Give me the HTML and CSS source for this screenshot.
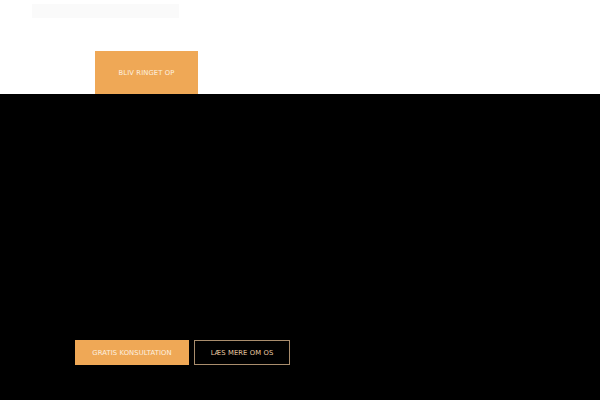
FILE: index.html
```html
<!DOCTYPE html>
<html lang="da">
<head>
<meta charset="utf-8">
<title>Forside</title>
<link rel="stylesheet" href="styles.css">
</head>
<body>
<header class="header">
  <div class="logo-bar"></div>
  <a class="btn btn-call" href="#">BLIV RINGET OP</a>
</header>
<section class="hero">
  <div class="hero-actions">
    <a class="btn btn-solid" href="#">GRATIS KONSULTATION</a>
    <a class="btn btn-outline" href="#">LÆS MERE OM OS</a>
  </div>
</section>
</body>
</html>
```
FILE: styles.css
```css
* { box-sizing: border-box; }
html, body { margin: 0; padding: 0; }
body {
  width: 600px;
  height: 400px;
  overflow: hidden;
  background: #000;
  font-family: "DejaVu Sans", "Liberation Sans", sans-serif;
}
.header {
  background: #fff;
  height: 94px;
  display: flex;
  flex-direction: column;
  padding: 4px 0 0 32px;
}
.logo-bar {
  width: 147px;
  height: 14px;
  background: #fafafa;
}
.btn {
  display: inline-flex;
  align-items: center;
  justify-content: center;
  font-size: 6.8px;
  text-decoration: none;
  letter-spacing: 0.1px;
  white-space: nowrap;
}
.btn-call {
  margin: 33px 0 0 63px;
  width: 103px;
  height: 43px;
  background: #efa856;
  color: #fdf1e0;
}
.hero {
  height: 306px;
  background: #000;
  display: flex;
  flex-direction: column;
  justify-content: flex-end;
  padding: 0 0 35px 75px;
}
.hero-actions {
  display: flex;
  gap: 5px;
}
.btn-solid {
  width: 114px;
  height: 25px;
  background: #efa856;
  color: #fdf1e0;
}
.btn-outline {
  width: 96px;
  height: 25px;
  border: 1px solid #a98d6d;
  color: #e9c9a0;
}
```
